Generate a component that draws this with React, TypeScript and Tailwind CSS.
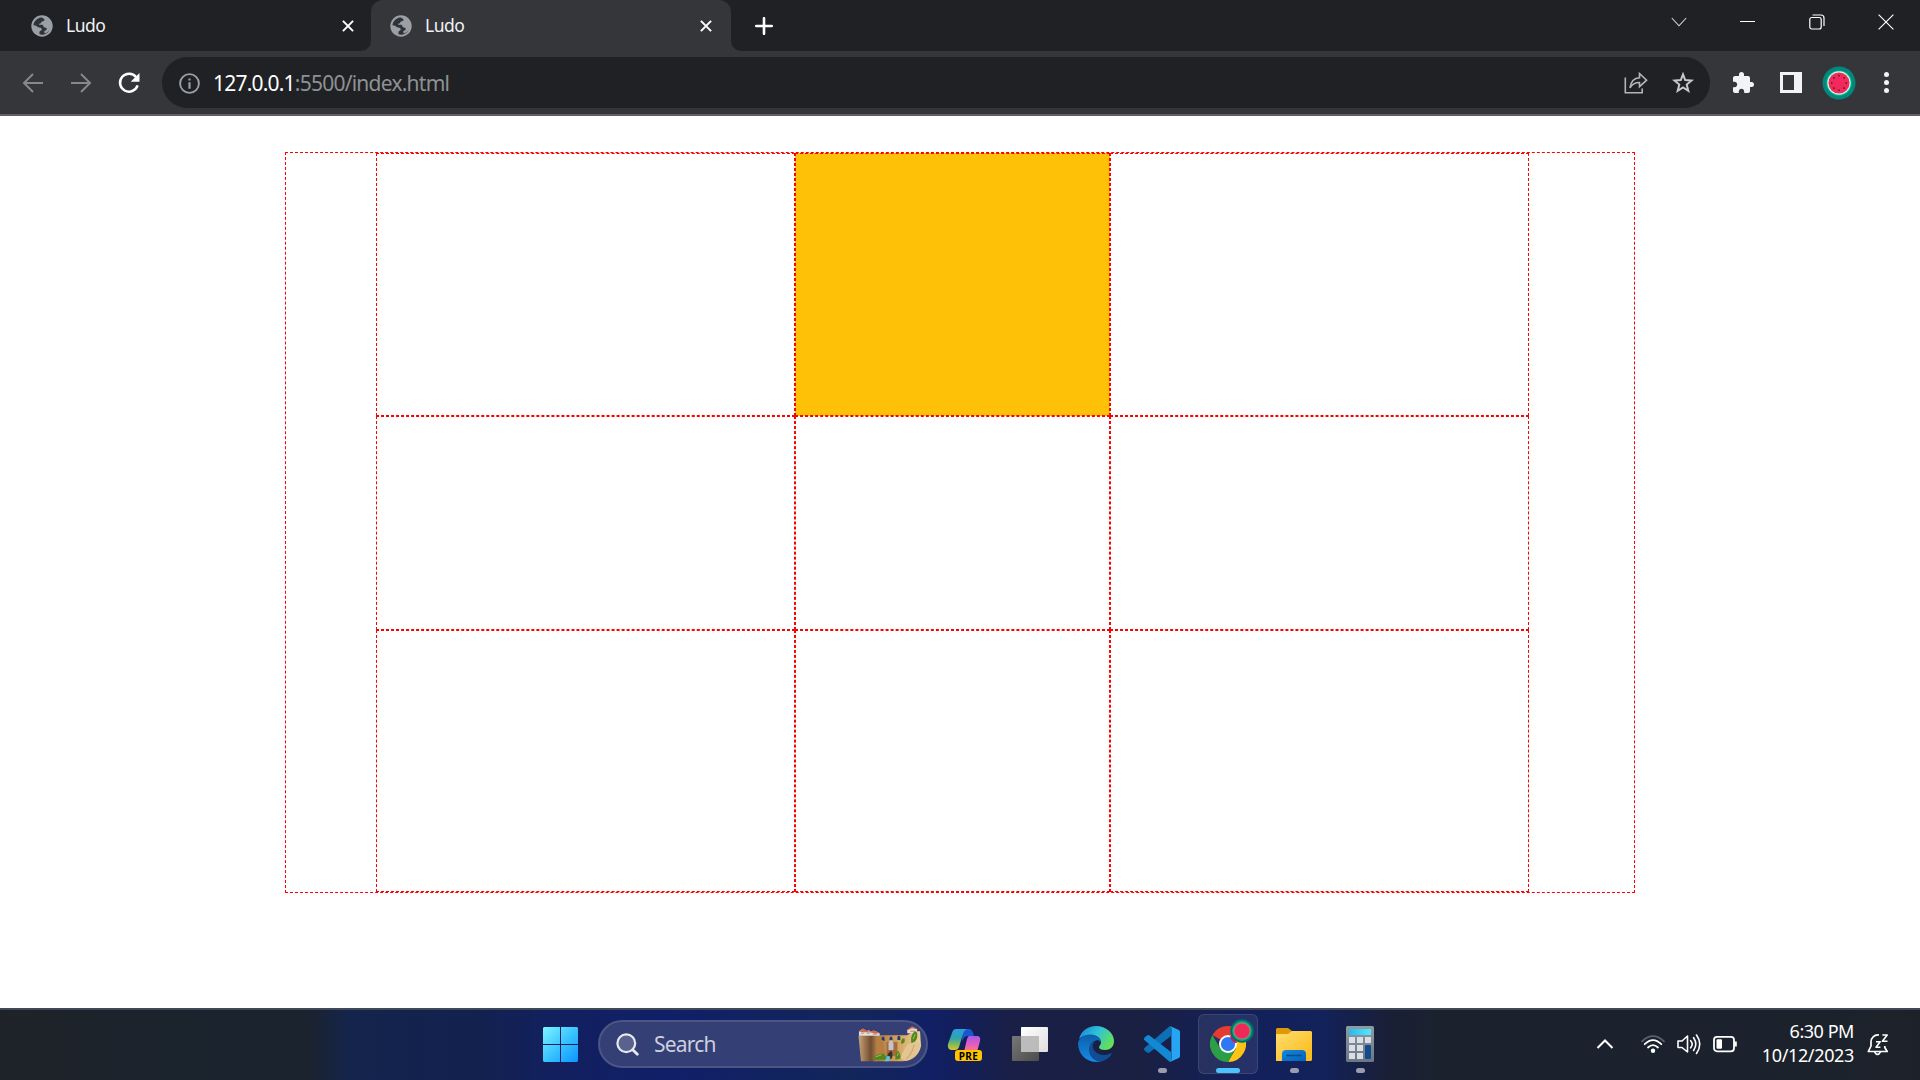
import React from "react";

function Globe() {
  return (
    <svg className="size-[22px]" viewBox="0 0 22 22">
      <circle cx="11" cy="11" r="10.7" fill="#9aa0a6" />
      <path
        d="M2.5 10.2 C2.8 6.2 6 3 10 2.4 L11 2.5 C11.4 3.5 13.6 3.2 13.5 5 C13.4 6.6 10.4 6 10.2 7.6 C10 8.8 8.2 8.6 7.8 9.2 C8.8 10.2 10 9.6 11.4 9.7 C12.6 10 12.2 11.6 13 12.2 C14 12.9 16 12.5 15.8 14 C15.6 15.6 13.4 15.4 13.2 16.6 C13.2 17.4 13.4 17.8 14 18.4 C16.8 17.6 19.2 15 19.6 12 C18.600 17 15 19.8 11 19.7 L8.600 19.2 C8.4 18 8.2 17 9 16 C10.2 15.6 10.8 15 10.8 14.2 C10.6 12.6 8.4 12.8 7.2 12.2 C6 11.4 5.4 10.6 2.5 10.2 Z"
        fill="#303236"
      />
    </svg>
  );
}

function TabClose() {
  return (
    <svg className="size-3" viewBox="0 0 12 12" fill="none" stroke="#fff" strokeWidth="2">
      <path d="M.9.9 11.1 11.1M11.1.9.9 11.1" />
    </svg>
  );
}

function TabStrip() {
  return (
    <div className="flex h-[51px] bg-[#202124]">
      <div className="flex h-[51px] w-[371px] items-center pr-[17px] pl-[31px]">
        <Globe />
        <span className="mb-0.5 ml-[13px] grow text-[17.5px] leading-6 tracking-[-0.5px] text-[#f1f3f4]">Ludo</span>
        <TabClose />
      </div>
      <div className="relative flex h-[51px] w-[360px] items-center rounded-t-[12px] bg-[#35363a] pr-[19px] pl-[19px]">
        <svg className="absolute bottom-0 -left-[10px] size-[10px]" viewBox="0 0 10 10">
          <path d="M10 0V10H0A10 10 0 0 0 10 0Z" fill="#35363a" />
        </svg>
        <svg className="absolute -right-[10px] bottom-0 size-[10px]" viewBox="0 0 10 10">
          <path d="M0 0V10H10A10 10 0 0 1 0 0Z" fill="#35363a" />
        </svg>
        <Globe />
        <span className="mb-0.5 ml-[13px] grow text-[17.5px] leading-6 tracking-[-0.5px] text-[#f1f3f4]">Ludo</span>
        <TabClose />
      </div>
      <div className="flex w-[65px] items-center justify-center">
        <svg className="size-[18px]" viewBox="0 0 18 18" stroke="#fff" strokeWidth="2.6" strokeLinecap="round">
          <path d="M9 1.2V16.8M1.2 9H16.8" />
        </svg>
      </div>
      <div className="ml-auto flex h-[43px]">
        <div className="flex w-[69px] items-center justify-center">
          <svg className="size-4" viewBox="0 0 16 16" fill="none" stroke="#d8d9da" strokeWidth="1.1">
            <path d="M.8 4 8 11.8 15.2 4" />
          </svg>
        </div>
        <div className="flex w-[69px] items-center justify-center">
          <div className="h-px w-[15px] bg-white" />
        </div>
        <div className="flex w-[69px] items-center justify-center">
          <svg className="size-4" viewBox="0 0 16 16" fill="none" stroke="#fff" strokeWidth="1.2">
            <rect x=".8" y="3.5" width="11.4" height="11.5" rx="2" />
            <path d="M3.5 1H12a3 3 0 0 1 3 3V12" />
          </svg>
        </div>
        <div className="flex w-[69px] items-center justify-center">
          <svg className="size-4" viewBox="0 0 16 16" stroke="#fff" strokeWidth="1.15">
            <path d="M.6.6 15.4 15.4M15.4.6.6 15.4" />
          </svg>
        </div>
      </div>
    </div>
  );
}

const seeds = [0, 45, 90, 135, 180, 225, 270, 315];

function Watermelon({ className }: { className: string }) {
  return (
    <svg className={className} viewBox="0 0 34 34">
      <circle cx="17" cy="17" r="16.5" fill="#00897b" />
      <circle cx="17" cy="17" r="12.6" fill="#00bfa5" />
      <circle cx="17" cy="17" r="11.7" fill="#d5f5dc" />
      <circle cx="17" cy="17" r="10.5" fill="#f2295b" />
      {seeds.map((a) => (
        <circle key={a} cx="17" cy="9.8" r=".8" fill="#3a1024" transform={`rotate(${a} 17 17)`} />
      ))}
    </svg>
  );
}

function Toolbar() {
  return (
    <div className="flex h-[65px] items-center border-b-2 border-[#5f6063] bg-[#35363a] pl-[22px]">
      <svg className="size-[22px]" viewBox="0 0 22 22" fill="none" stroke="#87888b" strokeWidth="2">
        <path d="M21 11H3M11 2 2 11 11 20" />
      </svg>
      <svg className="ml-[26px] size-[22px]" viewBox="0 0 22 22" fill="none" stroke="#87888b" strokeWidth="2">
        <path d="M1 11H19M11 2 20 11 11 20" />
      </svg>
      <svg className="ml-[26px] size-[22px]" viewBox="0 0 22 22">
        <path d="M18.2 5.2A9 9 0 1 0 19.6 13.4" fill="none" stroke="#fff" strokeWidth="2.5" />
        <path d="M21.5 1V9.8H12.7Z" fill="#fff" />
      </svg>
      <div className="ml-[22px] flex h-[51px] w-[1548px] items-center rounded-full bg-[#202124] pr-4 pl-[17px]">
        <svg className="mt-0.5 size-[21px]" viewBox="0 0 21 21" fill="none" stroke="#9aa0a6" strokeWidth="1.9">
          <circle cx="10.5" cy="10.5" r="9.4" />
          <path d="M10.5 9.3V15.7M10.5 5.5V7.6" strokeWidth="2.2" />
        </svg>
        <span className="ml-[13px] text-[21px] leading-7 tracking-[-0.8px] text-white">127.0.0.1</span>
        <span className="grow text-[21px] leading-7 tracking-[-0.76px] text-[#8e9194]">:5500/index.html</span>
        <svg className="mr-[24px] size-6" viewBox="0 0 24 24" fill="none" stroke="#b4b5b7" strokeWidth="1.6">
          <path d="M1.3 6.5V21.7H18.2V17.5" />
          <path d="M6 16.8C6.8 10.5 10.2 7 15.5 6.7V2.5L22.6 9.2 15.5 15.6V11.5C11.5 11.4 8.3 13 6 16.8Z" />
        </svg>
        <svg className="size-[22px]" viewBox="0 0 22 22" fill="none" stroke="#c7c8ca" strokeWidth="2">
          <path d="M11 2.4 13.2 8.1 19.6 8.5 14.7 12.5 16.3 18.8 11 15.4 5.7 18.8 7.3 12.5 2.4 8.5 8.8 8.1Z" />
        </svg>
      </div>
      <svg className="ml-[21px] size-[24px]" viewBox="0 0 24 24" fill="#f1f3f4">
        <path d="M20.5 11H19V7c0-1.1-.9-2-2-2h-4V3.5a2.5 2.5 0 0 0-5 0V5H4c-1.1 0-1.99.9-1.99 2v3.8H3.5c1.49 0 2.7 1.21 2.7 2.7s-1.21 2.7-2.7 2.7H2V20c0 1.1.9 2 2 2h3.8v-1.5c0-1.49 1.21-2.7 2.7-2.7s2.7 1.21 2.7 2.7V22H17c1.1 0 2-.9 2-2v-4h1.5a2.5 2.5 0 0 0 0-5Z" />
      </svg>
      <div className="ml-[25px] h-[21px] w-[22px] border-[3px] border-r-[8px] border-[#f1f3f4]" />
      <Watermelon className="ml-[20px] size-[34px]" />
      <div className="ml-7 flex flex-col gap-[3px]">
        <div className="size-[5px] rounded-full bg-[#f1f3f4]" />
        <div className="size-[5px] rounded-full bg-[#f1f3f4]" />
        <div className="size-[5px] rounded-full bg-[#f1f3f4]" />
      </div>
    </div>
  );
}

function Board() {
  return (
    <main className="h-[892px] bg-white pt-9">
      <div className="mx-auto flex h-[741px] w-[1350px] border border-dashed border-[#ff0000] pl-[90px]">
        <div className="grid grid-cols-[419px_315px_419px] grid-rows-[263px_214px_262px]">
          {Array.from({ length: 9 }, (_, i) => (
            <div key={i} className={i === 1 ? "border border-dashed border-[#ff0000] bg-[#ffc107]" : "border border-dashed border-[#ff0000]"} />
          ))}
        </div>
      </div>
    </main>
  );
}

function Castle() {
  return (
    <svg className="mr-px h-[36px] w-[65px]" viewBox="0 0 66 36">
      <defs>
        <linearGradient id="tower">
          <stop stopColor="#c9a378" />
          <stop offset=".3" stopColor="#a07a55" />
          <stop offset=".65" stopColor="#6f4d30" />
          <stop offset="1" stopColor="#b98850" />
        </linearGradient>
        <linearGradient id="wall">
          <stop stopColor="#aa763d" />
          <stop offset=".55" stopColor="#d6a763" />
          <stop offset="1" stopColor="#ecd09c" />
        </linearGradient>
      </defs>
      <path d="M17 9H50L56 5 63 5 64 20C62 29 56 35 46 35.5H16Z" fill="url(#wall)" />
      <path d="M.5 9.5 8 9 20 10 19 35.5H3Z" fill="url(#tower)" />
      <path d="M19 12 26 17 28 32 19 34Z" fill="#b87d40" />
      <path d="M29 16H40V30H29Z" fill="#a06c3e" />
      <path d="M31 24V17Q33.5 12 36 17V24Z" fill="#c5c2cf" />
      <path d="M24 14V12Q25.5 9 27 12V15ZM32 14V12Q33.5 9 35 12V14ZM40 14V11Q41.5 8 43 11V14Z" fill="#263b70" />
      <path d="M1 9.5V5L4 3 8 5 11 4 14 6 18 5 22 7V9.500H1Z" fill="#e8dfd7" />
      <path d="M1 5.5 5 2 10 5H13L16 4 22 7 18 7.500 12 6 7 6ZM49 4 55 0 61 3 56 5Z" fill="#cf6a4a" />
      <path d="M50 4 55 2 60 3V7H50Z" fill="#e9d7ca" />
      <path d="M3 7H6M9 7H12M15 8H19M53 5H58" stroke="#a98a86" />
      <path d="M43 33Q47 20 53 17L60 16 64 18Q61 29 50 35Z" fill="#e2c593" />
      <path d="M49 33Q55 28 57 19" stroke="#cfa873" strokeWidth="1.2" fill="none" />
      <path d="M54 17Q53 8 58 5 61 5 60 12 58 17 54 17ZM44 18Q43 13 47 12 49 17 44 18ZM38 34Q37 26 41 25 44 29 43 33ZM15 34Q18 27 26 28 30 31 28 34Z" fill="#52871f" />
      <path d="M56 13 58 8M40 30 41 27M18 31 24 29" stroke="#9bc13e" />
      <path d="M29 33Q30 26 34 25 36 29 34 33Z" fill="#3b2d26" />
      <path d="M27 35.5 30 30 33 31 31 35.5Z" fill="#53c6e4" />
    </svg>
  );
}

function Tile({ children, active, dot }: { children: React.ReactNode; active?: boolean; dot?: boolean }) {
  return (
    <div
      className={
        active
          ? "relative flex size-[60px] items-center justify-center rounded-md border border-white/10 bg-white/8"
          : "relative flex size-[60px] items-center justify-center"
      }
    >
      {children}
      {active && <div className="absolute bottom-0 left-[17px] h-[5px] w-6 rounded-full bg-[#4cc2ff]" />}
      {dot && <div className="absolute bottom-px left-[26px] h-[5px] w-[9px] rounded-full bg-[#9a9db2]" />}
    </div>
  );
}

function StartIcon() {
  return (
    <svg className="size-[35px]" viewBox="0 0 35 35">
      <defs>
        <linearGradient id="win" x1="0" y1="0" x2="35" y2="35" gradientUnits="userSpaceOnUse">
          <stop stopColor="#7df3ff" />
          <stop offset=".5" stopColor="#3cc5ff" />
          <stop offset="1" stopColor="#0a94ff" />
        </linearGradient>
      </defs>
      <path d="M1 0H17V17H0V1ZM18 0H34L35 1V17H18ZM0 18H17V35H1L0 34ZM18 18H35V34L34 35H18Z" fill="url(#win)" />
    </svg>
  );
}

function CopilotIcon() {
  return (
    <div className="relative mt-0.5 ml-0.5 size-[36px]">
      <svg className="size-[36px]" viewBox="0 0 36 36">
        <defs>
          <linearGradient id="cpA" x1="0" y1="0" x2="0" y2="1">
            <stop stopColor="#2a9de8" />
            <stop offset=".45" stopColor="#2fa6a5" />
            <stop offset="1" stopColor="#d5c91f" />
          </linearGradient>
          <linearGradient id="cpB" x1="0" y1="0" x2="0" y2="1">
            <stop stopColor="#a35bea" />
            <stop offset=".5" stopColor="#e25bc2" />
            <stop offset="1" stopColor="#ff7d70" />
          </linearGradient>
        </defs>
        <path d="M16 2H22Q25 2 26 6L27 9H21Q17 9 16 13L15 14Z" fill="#1758d1" />
        <path d="M9 2H20Q17 3 16 7L12 20Q11 23 8 23H4Q0 22 1 17L5 6Q6 2 9 2Z" fill="url(#cpA)" />
        <path d="M22 9H30Q34 9 33 14L30 25H17L20 12Q21 9 22 9Z" fill="url(#cpB)" />
      </svg>
      <span className="absolute top-[23px] left-2 flex h-[11px] w-[27px] items-center justify-center rounded-[3px] bg-[#ffc400] text-[10px] leading-none font-bold tracking-[0.3px] text-black">
        PRE
      </span>
    </div>
  );
}

function TaskViewIcon() {
  return (
    <svg className="size-[36px]" viewBox="0 0 36 36">
      <defs>
        <linearGradient id="tv" x1="0" y1="0" x2="1" y2="1">
          <stop stopColor="#fff" />
          <stop offset="1" stopColor="#dedede" />
        </linearGradient>
        <linearGradient id="tvd" x1="0" y1="0" x2="1" y2="1">
          <stop stopColor="#777" />
          <stop offset="1" stopColor="#4c4c4c" />
        </linearGradient>
      </defs>
      <rect x="0" y="10" width="27" height="25" rx="1" fill="url(#tvd)" />
      <rect x="9" y="1" width="27" height="25" rx="1" fill="url(#tv)" />
      <path d="M9 10H27V26H9Z" fill="#bcbcbc" />
    </svg>
  );
}

function EdgeIcon() {
  return (
    <svg className="size-[36px]" viewBox="0 0 36 36">
      <defs>
        <linearGradient id="edT" x1="0" y1=".2" x2="1" y2=".7">
          <stop stopColor="#1687d9" />
          <stop offset=".45" stopColor="#2fc3d8" />
          <stop offset="1" stopColor="#6ae34a" />
        </linearGradient>
        <linearGradient id="edB" x1="0" y1="0" x2="0" y2="1">
          <stop stopColor="#0c5fa8" />
          <stop offset="1" stopColor="#168ce5" />
        </linearGradient>
      </defs>
      <path d="M1 13C3 5 10 0 18 0 28 0 36 7 36 15 36 21 32 24 27 24 23 24 21 23 21 21 21 20 23 19 23 16 22 11 17 9 13 9 7 9 3 11 1 13Z" fill="url(#edT)" />
      <path d="M0 17C1 11 7 8.5 13 8.5 19 9 23 12 23 16 20 12 14 15 12 20 10 28 16 35 24 35 10 39 0 29 0 17Z" fill="url(#edB)" />
      <path d="M12.5 18.5C9 24 12 33 20 35.5 26 36 31 32 33.5 28.5 34 27.5 33 27 32 27.4 25 31 17 28 15 22 14 20 15 17 17 15.5 15 16 13 17 12.5 18.5Z" fill="#114d94" />
    </svg>
  );
}

function VSCodeIcon() {
  return (
    <svg className="size-[36px]" viewBox="0 0 36 36">
      <path d="M27 0V10L5.5 26.5Q4 27.5 2.7 26.2L.6 24.4Q-.6 23 .7 21.7L25 .8Z" fill="#0b70b5" />
      <path d="M27 36V26L5.5 9.5Q4 8.5 2.7 9.8L.6 11.6Q-.6 13 .7 14.3L25 35.2Z" fill="#1389d3" />
      <path d="M26.5.2 34.8 4Q36 4.7 36 6V30Q36 31.3 34.8 32L26.5 35.8Q27.4 34.8 27.4 33V3Q27.4 1.2 26.5.2Z" fill="#27a5f2" />
    </svg>
  );
}

function ChromeIcon() {
  return (
    <div className="relative size-[36px]">
      <svg className="size-[36px]" viewBox="0 0 36 36">
        <path d="M18 18 2.4 9A18 18 0 0 1 33.6 9Z" fill="#e53b31" />
        <path d="M18 9H33.6A18 18 0 0 1 18 36L25.8 22.5Z" fill="#fdc413" />
        <path d="M2.4 9 10.2 22.5 25.8 22.5 18 36A18 18 0 0 1 2.4 9Z" fill="#2c9f46" />
        <circle cx="18" cy="18" r="9" fill="#fff" />
        <circle cx="18" cy="18" r="7.1" fill="#2f78f2" />
        <path d="M18 9H20Q20 14 25 17H27A9 9 0 0 0 18 9Z" fill="#c41e55" />
      </svg>
      <svg className="absolute -top-[7px] left-5 size-6" viewBox="0 0 24 24">
        <circle cx="12" cy="12" r="11.8" fill="#006f68" />
        <circle cx="12" cy="12" r="9.9" fill="#17a182" />
        <circle cx="12" cy="12" r="8.6" fill="#8f9077" />
        <circle cx="12" cy="12" r="7.6" fill="#ef2957" />
      </svg>
    </div>
  );
}

function ExplorerIcon() {
  return (
    <svg className="size-[36px]" viewBox="0 0 36 36">
      <defs>
        <linearGradient id="fold" x1="0" y1="0" x2="1" y2="1">
          <stop stopColor="#ffde70" />
          <stop offset="1" stopColor="#fbb813" />
        </linearGradient>
        <linearGradient id="foldB" x1="0" y1="0" x2="1" y2="1">
          <stop stopColor="#118ae0" />
          <stop offset="1" stopColor="#0660b8" />
        </linearGradient>
      </defs>
      <path d="M0 3 1 2H12L16 5V10H0Z" fill="#dc9a08" />
      <path d="M0 8H12L16 5H35L36 6V34L35 35H0Z" fill="url(#fold)" />
      <path d="M6 35V28Q6 24 10 24H26Q30 24 30 28V35Z" fill="url(#foldB)" />
      <path d="M11 29.5H25" stroke="#074a88" strokeWidth="1.7" strokeLinecap="round" />
    </svg>
  );
}

function CalculatorIcon() {
  return (
    <svg className="h-[36px] w-[28px]" viewBox="0 0 28 36">
      <defs>
        <linearGradient id="calc" x1="0" y1="0" x2="0" y2="1">
          <stop stopColor="#929aa0" />
          <stop offset="1" stopColor="#6b7681" />
        </linearGradient>
        <linearGradient id="disp">
          <stop stopColor="#27b9ef" />
          <stop offset="1" stopColor="#55e7ff" />
        </linearGradient>
      </defs>
      <rect width="28" height="36" rx="1.5" fill="url(#calc)" />
      <rect x="3" y="3" width="22" height="6" rx=".7" fill="url(#disp)" />
      <path d="M3 11h6v6H3zM11 11h6v6h-6zM19 11h6v6h-6zM3 19h6v6H3zM11 19h6v6h-6zM3 27h6v6H3zM11 27h6v6h-6z" fill="#d9dee9" />
      <rect x="19" y="19" width="6" height="14" rx="1" fill="#114b8e" />
    </svg>
  );
}

function Taskbar() {
  return (
    <footer className="relative flex h-[72px] justify-center border-t-2 border-[#414858] bg-[linear-gradient(90deg,#1f2329_0px,#1b232d_170px,#1b232f_310px,#14244c_350px,#13214f_480px,#12205f_550px,#111f68_670px,#12265a_850px,#111f64_935px,#191f46_1010px,#1a2042_1140px,#13205b_1240px,#12225b_1320px,#191f35_1390px,#1b222e_1440px,#1b222d_1750px,#1d222a_1920px)] pt-1">
      <Tile>
        <StartIcon />
      </Tile>
      <div className="mt-1.5 mr-1.5 ml-2 flex h-12 w-[330px] items-center rounded-full border-2 border-[#4b5684] bg-[#343f75] pr-0.5 pl-4">
        <svg className="size-[23px]" viewBox="0 0 23 23" fill="none" stroke="#e7e9ef" strokeWidth="2.2" strokeLinecap="round">
          <circle cx="10.3" cy="10.2" r="8.9" fill="#59628d" />
          <path d="M16.7 16.7 21.3 21.3" strokeWidth="2.8" />
        </svg>
        <span className="ml-[15px] grow text-[21px] leading-7 tracking-[-0.8px] text-[#ccd0df]">Search</span>
        <Castle />
      </div>
      <div className="flex gap-1.5">
        <Tile>
          <CopilotIcon />
        </Tile>
        <Tile>
          <TaskViewIcon />
        </Tile>
        <Tile>
          <EdgeIcon />
        </Tile>
        <Tile dot>
          <VSCodeIcon />
        </Tile>
        <Tile active>
          <ChromeIcon />
        </Tile>
        <Tile dot>
          <ExplorerIcon />
        </Tile>
        <Tile dot>
          <CalculatorIcon />
        </Tile>
      </div>
      <div className="absolute inset-y-0 right-0 flex items-center pr-[30px] pb-[2px] text-white">
        <svg className="mr-[27px] h-4 w-[18px]" viewBox="0 0 18 16" fill="none" stroke="#fff" strokeWidth="2">
          <path d="M1.5 12 9 4.5 16.5 12" />
        </svg>
        <svg className="h-6 w-6" viewBox="0 0 24 24" fill="none" strokeWidth="1.8" strokeLinecap="round">
          <path d="M1 9.3Q12-1 23 9.3" stroke="#59606c" />
          <path d="M3.7 12.2Q12 4 20.3 12.2M7 15.5Q12 10.8 17 15.5" stroke="#fff" />
          <circle cx="12" cy="18.8" r="2.2" fill="#fff" />
        </svg>
        <svg className="ml-3 h-6 w-6" viewBox="0 0 24 24" fill="none" stroke="#fff" strokeWidth="1.6" strokeLinejoin="round">
          <path d="M1 9H5L10.5 4V20L5 15.5H1Z" />
          <path d="M13.7 8.7Q16.7 12 13.7 15.8M16.6 5.7Q21 12 16.6 18.5M19.5 3Q26 12 19.5 21.5" strokeLinecap="round" />
        </svg>
        <svg className="ml-3 h-6 w-6" viewBox="0 0 24 24" fill="none" stroke="#fff" strokeWidth="1.8">
          <rect x="1" y="4.8" width="20" height="14.5" rx="3" />
          <rect x="3.5" y="7.3" width="5.5" height="9.5" rx="1" fill="#fff" stroke="none" />
          <path d="M22.6 9.5V14.5" strokeWidth="2.4" />
        </svg>
        <div className="mb-0.5 ml-6 w-[93px] text-right text-[18px] leading-6 whitespace-nowrap">
          <div className="tracking-[-0.45px]">6:30 PM</div>
          <div className="tracking-[-0.35px]">10/12/2023</div>
        </div>
        <svg className="ml-3 size-6" viewBox="0 0 24 24" fill="none" stroke="#fff" strokeWidth="1.7" strokeLinejoin="round">
          <path d="M13 3C8 2.5 5 6 5 10V14L2.3 19.5H21.2L18.8 15.5V14" />
          <path d="M8.5 19.8Q11.5 25 14.5 19.8" />
          <path d="M10 9.7H14.2L10 15.2H14.4M16.4 3H21.2L16.4 9.3H21.5" strokeWidth="1.6" />
        </svg>
      </div>
    </footer>
  );
}

export default function App() {
  return (
    <div className="flex h-[1080px] w-[1920px] flex-col overflow-hidden bg-white font-['Noto_Sans','Open_Sans',sans-serif]">
      <TabStrip />
      <Toolbar />
      <Board />
      <Taskbar />
    </div>
  );
}
